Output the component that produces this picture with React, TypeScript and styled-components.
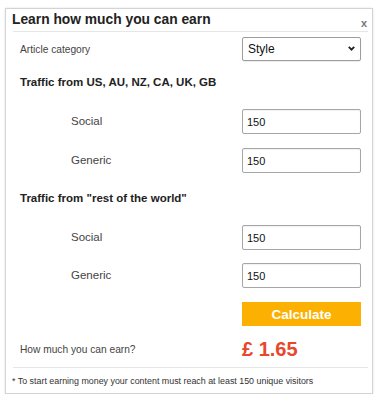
import React from "react";
import styled, { createGlobalStyle } from "styled-components";

const Global = createGlobalStyle`
  html, body { margin: 0; padding: 0; background: #fff; }
  body { font-family: "Liberation Sans", Arial, sans-serif; }
  * { box-sizing: border-box; }
`;

const Panel = styled.div`
  margin: 8px 0 0 5px;
  width: 368px;
  height: 386px;
  border: 1px solid #d4d4d4;
  box-shadow: 0 0 2px rgba(0, 0, 0, 0.12);
  background: #fff;
  display: flex;
  flex-direction: column;
`;

const Header = styled.div`
  height: 23px;
  margin: 0 4px 0 7px;
  border-bottom: 1px solid #e6e6e6;
  display: flex;
  align-items: center;
  justify-content: space-between;
`;

const Title = styled.h1`
  margin: 0 0 0 -1px;
  font-size: 13.8px;
  font-weight: bold;
  color: #222;
  line-height: 20px;
`;

const Close = styled.span`
  font-size: 11px;
  font-weight: bold;
  color: #777;
  margin-top: 5px;
  margin-right: 1px;
`;

const Body = styled.div`
  padding: 0 11px 0 14px;
  display: flex;
  flex-direction: column;
`;

const Row = styled.div<{ $top: number; $h?: number }>`
  margin-top: ${(p) => p.$top}px;
  height: ${(p) => p.$h ?? 25}px;
  display: grid;
  grid-template-columns: 1fr 119px;
  align-items: center;
`;

const Label = styled.label<{ $indent?: boolean; $size?: number }>`
  padding-left: ${(p) => (p.$indent ? 51 : 0)}px;
  padding-bottom: ${(p) => (p.$indent ? 2 : 0)}px;
  font-size: ${(p) => p.$size ?? 10.2}px;
  color: #444;
`;

const Heading = styled.div<{ $top: number }>`
  margin-top: ${(p) => p.$top}px;
  height: 20px;
  line-height: 20px;
  font-size: 11.5px;
  font-weight: bold;
  color: #222;
`;

const SelectWrap = styled.div`
  position: relative;
  height: 24px;
`;

const Select = styled.select`
  appearance: none;
  -webkit-appearance: none;
  width: 100%;
  height: 100%;
  border: 1px solid #9d9d9d;
  border-radius: 2px;
  background: #fff;
  font-family: "Liberation Sans", Arial, sans-serif;
  font-size: 12px;
  color: #111;
  padding: 0 0 0 5px;
  box-shadow: 0 1px 1px rgba(0, 0, 0, 0.08);
`;

const Chevron = styled.svg`
  position: absolute;
  right: 6px;
  top: 9px;
  pointer-events: none;
`;

const Input = styled.input`
  width: 100%;
  height: 25px;
  border: 1px solid #a6a6a6;
  border-radius: 2px;
  padding: 0 0 0 4px;
  font-family: "Liberation Sans", Arial, sans-serif;
  font-size: 11px;
  color: #111;
  box-shadow: inset 0 1px 1px rgba(0, 0, 0, 0.06);
  outline: none;
`;

const Button = styled.button`
  height: 24px;
  width: 100%;
  border: none;
  background: #fcb002;
  color: #fff;
  font-family: "Liberation Sans", Arial, sans-serif;
  font-size: 13.5px;
  font-weight: bold;
  padding: 0;
`;

const Amount = styled.div`
  font-size: 20px;
  font-weight: bold;
  color: #e8472b;
  line-height: 22px;
`;

const Divider = styled.hr`
  margin: 7px 4px 0 7px;
  border: none;
  border-top: 1px solid #e6e6e6;
  height: 0;
`;

const Note = styled.p`
  margin: 5px 0 0 6px;
  font-size: 8.9px;
  color: #333;
  line-height: 16px;
`;

const Field = ({ label, top }: { label: string; top: number }) => (
  <Row $top={top}>
    <Label $indent $size={11.5}>
      {label}
    </Label>
    <Input defaultValue="150" />
  </Row>
);

export default function App() {
  return (
    <>
      <Global />
      <Panel>
        <Header>
          <Title>Learn how much you can earn</Title>
          <Close>x</Close>
        </Header>
        <Body>
          <Row $top={5} $h={24}>
            <Label>Article category</Label>
            <SelectWrap>
              <Select defaultValue="Style">
                <option>Style</option>
              </Select>
              <Chevron width="7" height="5" viewBox="0 0 7 5">
                <path d="M0.8 0.8 L3.5 3.6 L6.2 0.8" stroke="#222" strokeWidth="1.8" fill="none" />
              </Chevron>
            </SelectWrap>
          </Row>
          <Heading $top={11}>Traffic from US, AU, NZ, CA, UK, GB</Heading>
          <Field label="Social" top={17} />
          <Field label="Generic" top={14} />
          <Heading $top={15}>Traffic from "rest of the world"</Heading>
          <Field label="Social" top={17} />
          <Field label="Generic" top={13} />
          <Row $top={14} $h={24}>
            <span />
            <Button>Calculate</Button>
          </Row>
          <Row $top={12} $h={22}>
            <Label>How much you can earn?</Label>
            <Amount>£ 1.65</Amount>
          </Row>
        </Body>
        <Divider />
        <Note>* To start earning money your content must reach at least 150 unique visitors</Note>
      </Panel>
    </>
  );
}
